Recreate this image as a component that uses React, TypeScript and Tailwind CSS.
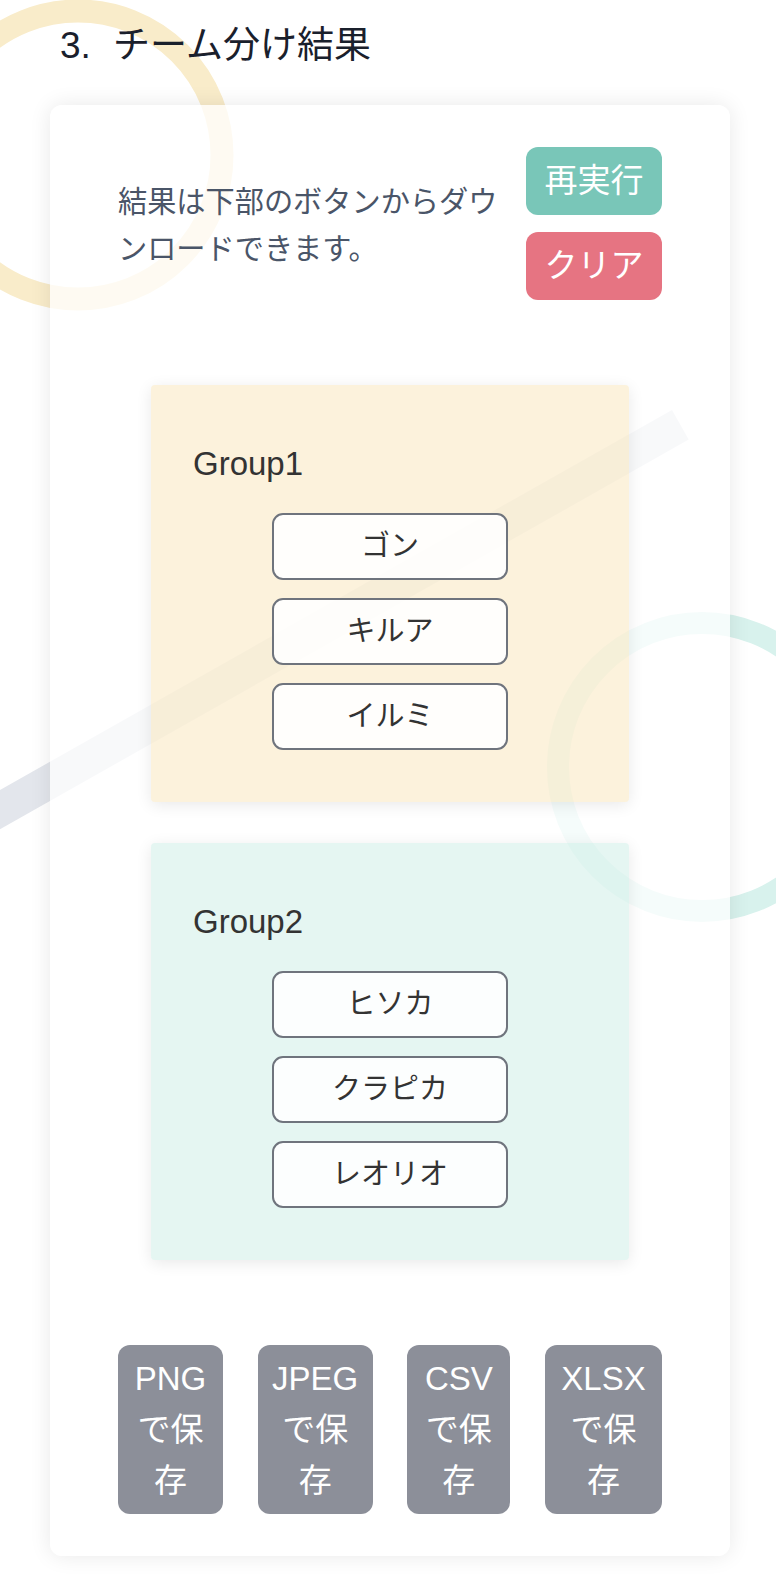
import React from "react";

const groups = [
  { name: "Group1", bg: "bg-[#f5d48a]/30", members: ["ゴン", "キルア", "イルミ"] },
  { name: "Group2", bg: "bg-[#a9e2d4]/30", members: ["ヒソカ", "クラピカ", "レオリオ"] },
];

const downloads = [
  { label: "PNGで保存", w: "w-[105px]" },
  { label: "JPEGで保存", w: "w-[115px]" },
  { label: "CSVで保存", w: "w-[103px]" },
  { label: "XLSXで保存", w: "w-[117px]" },
];

function Decorations() {
  return (
    <svg
      className="pointer-events-none absolute left-0 top-0"
      width={776}
      height={1592}
      viewBox="0 0 776 1592"
    >
      <circle cx={78} cy={155} r={144} fill="none" stroke="#f9ecca" strokeWidth={23} />
      <circle cx={702} cy={767} r={144} fill="none" stroke="#d8f2ed" strokeWidth={22} />
      <polygon points="672,410 688.7,439.6 -20,840.6 -20,801.3" fill="#e3e6ec" />
    </svg>
  );
}

export default function App() {
  return (
    <div className="relative min-h-[1592px] w-full overflow-hidden bg-white font-['Liberation_Sans','Noto_Sans_CJK_JP',sans-serif]">
      <Decorations />
      <div className="relative">
        <h2 className="flex pl-[60px] pt-[22px] text-[37px] font-normal leading-[48px] text-[#1a202c]">
          <span className="w-[53px]">3.</span>
          <span>チーム分け結果</span>
        </h2>
        <div className="ml-[50px] mt-[35px] w-[680px] rounded-[12px] bg-white/75 px-[68px] pb-[42px] pt-[42px] shadow-[0_0_22px_rgba(0,0,0,0.09)]">
          <div className="flex items-center gap-[14px]">
            <p className="flex-1 pt-[4px] text-[29.2px] leading-[1.58] text-[#4a5568]">
              結果は下部のボタンからダウンロードできます。
            </p>
            <div className="flex flex-col gap-[17px]">
              <button className="flex h-[68px] w-[136px] items-center justify-center rounded-[12px] bg-[#79c6b8] text-[33px] text-white">
                再実行
              </button>
              <button className="flex h-[68px] w-[136px] items-center justify-center rounded-[12px] bg-[#e67482] text-[33px] text-white">
                クリア
              </button>
            </div>
          </div>

          <div className="mt-[85px] flex flex-col items-center gap-[41px]">
            {groups.map((g) => (
              <div
                key={g.name}
                className={`w-[478px] rounded-[4px] pb-[52px] pt-[54px] shadow-[0_3px_16px_rgba(0,0,0,0.09)] ${g.bg}`}
              >
                <div className="pl-[42px] text-[33px] leading-[50px] text-[#333333]">{g.name}</div>
                <div className="mt-[24px] flex flex-col items-center gap-[18px]">
                  {g.members.map((m) => (
                    <div
                      key={m}
                      className="flex h-[67px] w-[236px] items-center justify-center rounded-[11px] border-2 border-[#6f747d] bg-white/90 text-[29px] text-[#333333]"
                    >
                      {m}
                    </div>
                  ))}
                </div>
              </div>
            ))}
          </div>

          <div className="mt-[85px] flex items-start justify-between">
            {downloads.map((d) => (
              <button
                key={d.label}
                className={`rounded-[12px] bg-[#8c8f99] px-[12px] py-[8px] text-center text-[33px] leading-[51px] text-white ${d.w}`}
              >
                {d.label}
              </button>
            ))}
          </div>
        </div>
      </div>
    </div>
  );
}
